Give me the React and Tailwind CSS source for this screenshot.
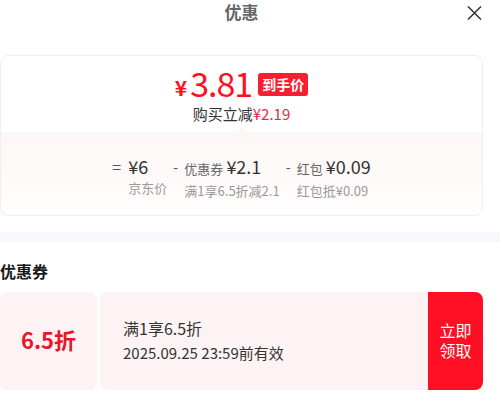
import React from "react";

const font = { fontFamily: '"Noto Sans CJK SC", "Noto Sans", sans-serif' };

export default function App() {
  return (
    <div className="w-[500px] h-[403px] bg-white overflow-hidden pr-[17px]" style={font}>
      {/* header */}
      <div className="relative h-[55px] flex justify-center">
        <span className="text-[17px] font-bold text-[#666] leading-[24px]">优惠</span>
        <svg
          className="absolute right-[1px] top-[6px]"
          width="15"
          height="14"
          viewBox="0 0 15 14"
          fill="none"
          stroke="#333"
          strokeWidth="1.5"
        >
          <path d="M1 0.5 L14 13.5 M14 0.5 L1 13.5" />
        </svg>
      </div>

      {/* summary card */}
      <div className="h-[161px] rounded-[8px] border border-[#efefef] overflow-hidden flex flex-col">
        <div className="h-[76px] bg-white flex flex-col items-center pt-[10px] relative">
          <div className="flex items-center text-[#ff0f23] h-[34px]">
            <span className="text-[21px] font-bold leading-[24px] mt-[8px] mr-[3px]">¥</span>
            <span className="text-[34px] leading-[34px] tracking-[-1px]">3.81</span>
            <span className="ml-[6px] mt-[2px] bg-[#fa1e32] text-white text-[14px] font-bold leading-[23px] h-[23px] px-[4px] rounded-[3px]">
              到手价
            </span>
          </div>
          <div className="mt-[4px] text-[15px] leading-[20px] text-[#333]">
            购买立减<span className="text-[#f0263c]">¥2.19</span>
          </div>
          <div className="absolute left-1/2 bottom-0 -translate-x-1/2 w-0 h-0 border-l-[5px] border-r-[5px] border-b-[4px] border-l-transparent border-r-transparent border-b-[#fdf6f6]" />
        </div>
        <div className="flex-1 bg-gradient-to-b from-[#fdf6f6] to-[#fffdfd] flex justify-center pt-[22px] gap-[6px]">
          <div className="flex items-start">
            <span className="text-[#555] text-[16px] leading-[24px] w-[16px]">=</span>
            <div className="flex flex-col">
              <div className="leading-[24px] text-[18px] text-[#333]">¥6</div>
              <div className="text-[13px] leading-[17px] text-[#999] mt-[1px]">京东价</div>
            </div>
          </div>
          <div className="flex items-start">
            <span className="text-[#555] text-[14px] leading-[24px] w-[11px]">-</span>
            <div className="flex flex-col">
              <div className="flex items-baseline leading-[24px] text-[#333]">
                <span className="text-[13px] text-[#666] mr-[3px]">优惠券</span>
                <span className="text-[18px]">¥2.1</span>
              </div>
              <div className="text-[13px] leading-[17px] text-[#999] mt-[1px]">满1享6.5折减2.1</div>
            </div>
          </div>
          <div className="flex items-start">
            <span className="text-[#555] text-[14px] leading-[24px] w-[11px]">-</span>
            <div className="flex flex-col">
              <div className="flex items-baseline leading-[24px] text-[#333]">
                <span className="text-[13px] text-[#666] mr-[3px]">红包</span>
                <span className="text-[18px]">¥0.09</span>
              </div>
              <div className="text-[13px] leading-[17px] text-[#999] mt-[1px]">红包抵¥0.09</div>
            </div>
          </div>
        </div>
      </div>

      {/* separator band */}
      <div className="mt-[16px] h-[10px] bg-[#f6f8fb] -mr-[17px]" />

      {/* coupons */}
      <div className="mt-[18px] text-[16px] font-bold text-[#1a1a1a] leading-[22px]">优惠券</div>
      <div className="mt-[10px] h-[98px] flex relative">
        <div className="w-[97px] bg-[#fdf3f4] rounded-[6px] flex items-center justify-center">
          <span className="text-[22px] font-bold text-[#e8162c] leading-[26px] mb-[4px]">6.5折</span>
        </div>
        <div className="ml-[3px] flex-1 bg-[#fdf3f4] rounded-l-[6px] flex flex-col justify-center pl-[23px] pb-[2px] text-[#333]">
          <div className="text-[16px] leading-[22px]">满1享6.5折</div>
          <div className="text-[15px] leading-[22px] mt-[3px]">2025.09.25 23:59前有效</div>
        </div>
        <div className="w-[55px] bg-[#ff0f23] rounded-r-[8px] flex flex-col items-center justify-center text-white text-[16px] leading-[20px] pb-[2px]">
          <span>立即</span>
          <span>领取</span>
        </div>
        <div className="absolute left-[94px] -top-[4px] w-[9px] h-[9px] rounded-full bg-white" />
        <div className="absolute left-[94px] -bottom-[4px] w-[9px] h-[9px] rounded-full bg-white" />
      </div>
    </div>
  );
}
